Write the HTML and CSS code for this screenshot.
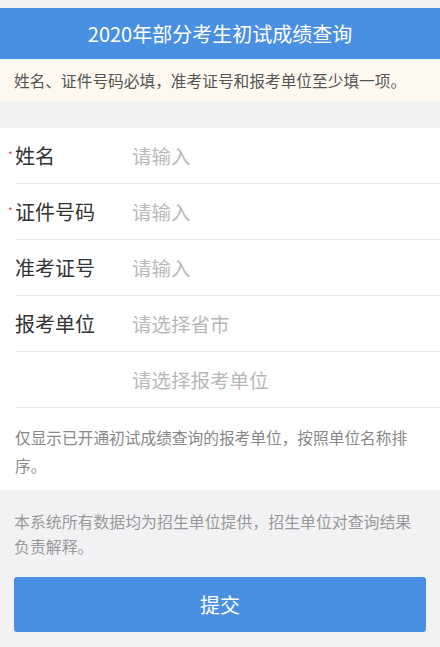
FILE: index.html
```html
<!DOCTYPE html>
<html lang="zh-CN">
<head>
    <meta charset="UTF-8">
    <meta name="viewport" content="width=device-width, initial-scale=1.0">
    <title>2020年部分考生初试成绩查询</title>
    <link rel="stylesheet" href="styles.css">
</head>
<body>

<div class="page">
    <div class="header">2020年部分考生初试成绩查询</div>

    <div class="notice">姓名、证件号码必填，准考证号和报考单位至少填一项。</div>

    <div class="form">
        <div class="row">
            <label class="label"><span class="req">*</span>姓名</label>
            <input class="field" type="text" placeholder="请输入">
        </div>
        <div class="row">
            <label class="label"><span class="req">*</span>证件号码</label>
            <input class="field" type="text" placeholder="请输入">
        </div>
        <div class="row">
            <label class="label">准考证号</label>
            <input class="field" type="text" placeholder="请输入">
        </div>
        <div class="row">
            <label class="label">报考单位</label>
            <input class="field" type="text" placeholder="请选择省市" readonly>
        </div>
        <div class="row">
            <label class="label"></label>
            <input class="field" type="text" placeholder="请选择报考单位" readonly>
        </div>
        <p class="tip">仅显示已开通初试成绩查询的报考单位，按照单位名称排序。</p>
    </div>

    <div class="footer">
        <p class="disclaimer">本系统所有数据均为招生单位提供，招生单位对查询结果负责解释。</p>
        <button class="submit" type="button">提交</button>
    </div>
</div>

</body>
</html>
```

FILE: styles.css
```css
body {
    margin: 0;
    background-color: #f2f2f4;
    font-family: "Noto Sans CJK SC", "Noto Sans", sans-serif;
    color: #333;
}
.page {
    padding-top: 8px;
}
.header {
    height: 51px;
    line-height: 51px;
    background-color: #4a90e2;
    color: #fff;
    font-size: 20px;
    text-align: center;
}
.notice {
    margin-top: 1px;
    height: 41px;
    line-height: 41px;
    padding: 0 14px;
    background-color: #fdf9ee;
    color: #555;
    font-size: 15.7px;
}
.form {
    margin-top: 27px;
    background-color: #fff;
}
.row {
    display: flex;
    align-items: center;
    height: 55px;
    margin-left: 16px;
    border-bottom: 1px solid #e6e6e6;
}
.label {
    position: relative;
    flex: 0 0 117px;
    margin-left: -1px;
    font-size: 20px;
    color: #333;
}
.req {
    position: absolute;
    left: -7px;
    top: 9px;
    font-size: 10px;
    line-height: 1;
    color: #d9534f;
}
.field {
    flex: 1;
    min-width: 0;
    padding: 0;
    border: none;
    outline: none;
    background: transparent;
    font-family: inherit;
    font-size: 19.5px;
    color: #333;
}
.field::placeholder {
    color: #b8b8b8;
}
.tip {
    margin: 0;
    padding: 16px 15px 10px;
    line-height: 28px;
    font-size: 15.7px;
    color: #888;
}
.footer {
    padding: 19px 14px 15px;
}
.disclaimer {
    margin: 0;
    line-height: 25px;
    font-size: 15.9px;
    color: #999;
}
.submit {
    display: block;
    width: 100%;
    height: 55px;
    margin-top: 18px;
    border: none;
    border-radius: 3px;
    background-color: #4a90e2;
    color: #fff;
    font-family: inherit;
    font-size: 20px;
    cursor: pointer;
}
```
